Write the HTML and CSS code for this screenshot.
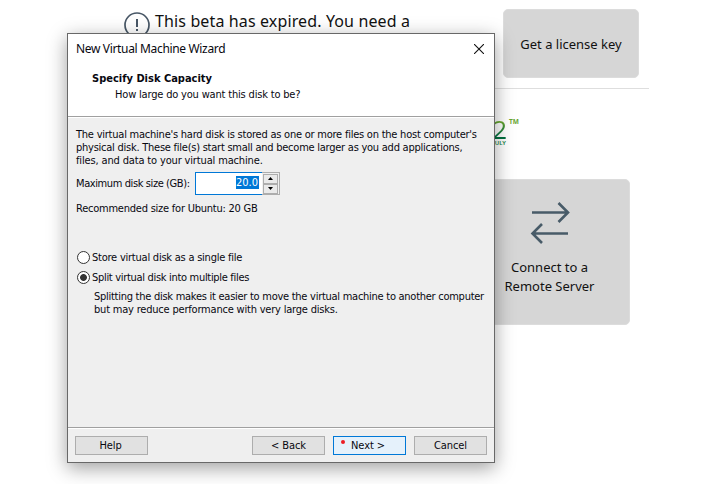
FILE: index.html
```html
<!DOCTYPE html>
<html lang="en">
<head>
<meta charset="utf-8">
<title>New Virtual Machine Wizard</title>
<link rel="stylesheet" href="styles.css">
</head>
<body>
<main class="home">
  <header class="banner">
    <svg class="alert" width="26" height="26" viewBox="0 0 26 26"><circle cx="13" cy="13" r="12" fill="none" stroke="#485766" stroke-width="1.7"/><path d="M13 7v8M13 17v2" stroke="#485766" stroke-width="2"/></svg>
    <p class="notice">This beta has expired. You need a</p>
    <div class="license"><span>Get a license key</span></div>
  </header>
  <section class="content">
    <div class="logo">
      <span class="logo-main"><span class="logo-two">2</span><span class="logo-sub">ULY</span></span>
      <span class="logo-tm">TM</span>
    </div>
    <div class="connect">
      <svg width="40" height="42" viewBox="0 0 40 42" fill="none" stroke="#485b68" stroke-width="2.6"><path d="M2 10.500H38M28.500 1l9.500 9.500L28.500 20M38 31.500H2.500M12 22L2.500 31.500L12 41"/></svg>
      <span>Connect to a</span>
      <span>Remote Server</span>
    </div>
  </section>
</main>

<div class="dialog">
  <div class="head">
    <div class="titlebar">
      <span class="title">New Virtual Machine Wizard</span>
      <svg width="10" height="10" viewBox="0 0 10 10"><path d="M0 0l10 10M10 0L0 10" stroke="#111" stroke-width="1.1"/></svg>
    </div>
    <div class="heading"><span>Specify Disk Capacity</span></div>
    <div class="sub"><span>How large do you want this disk to be?</span></div>
  </div>
  <div class="body">
    <div class="line"><span class="p1">The virtual machine's hard disk is stored as one or more files on the host computer's</span></div>
    <div class="line"><span class="p2">physical disk. These file(s) start small and become larger as you add applications,</span></div>
    <div class="line"><span class="p3">files, and data to your virtual machine.</span></div>
    <div class="size-row">
      <span class="size-label">Maximum disk size (GB):</span>
      <div class="field">
        <div class="entry"><span class="selected">20.0</span></div>
        <div class="spin">
          <span class="step"><svg width="5" height="3" viewBox="0 0 5 3"><path d="M0 3L2.500 0L5 3z"/></svg></span>
          <span class="step"><svg width="5" height="3" viewBox="0 0 5 3"><path d="M0 0L2.500 3L5 0z"/></svg></span>
        </div>
      </div>
    </div>
    <div class="line rec"><span>Recommended size for Ubuntu: 20 GB</span></div>
    <div class="option"><i class="radio"></i><span class="o1">Store virtual disk as a single file</span></div>
    <div class="option"><i class="radio on"></i><span class="o2">Split virtual disk into multiple files</span></div>
    <div class="line hint"><span class="h1">Splitting the disk makes it easier to move the virtual machine to another computer</span></div>
    <div class="line hint"><span class="h2">but may reduce performance with very large disks.</span></div>
  </div>
  <div class="footer">
    <div class="btn help"><span>Help</span></div>
    <div class="btn"><span>&lt; Back</span></div>
    <div class="btn next"><span>Next &gt;</span><i class="dot"></i></div>
    <div class="btn"><span>Cancel</span></div>
  </div>
</div>
</body>
</html>
```
FILE: styles.css
```css
* { box-sizing: border-box; }
body { margin: 0; width: 727px; height: 484px; overflow: hidden; background: #fff; color: #111; font-family: "Noto Sans", sans-serif; }
p { margin: 0; }
span { white-space: nowrap; }

.home { width: 525px; margin-left: 124px; }
.banner { display: flex; height: 89px; border-bottom: 1px solid #dedede; }
.alert { margin-top: 12px; flex: none; }
.notice { margin: 9px 0 0 5px; width: 348px; font-size: 16px; line-height: 24px; letter-spacing: .13px; white-space: nowrap; flex: none; }
.license { margin-top: 9px; width: 136px; height: 69px; flex: none; border: 1px solid #dcdcdc; border-radius: 5px; background: #d6d6d6; display: flex; align-items: center; justify-content: center; font-size: 13px; }

.content { display: flex; flex-direction: column; align-items: flex-start; margin-left: 356px; }
.logo { display: flex; height: 90px; padding-top: 27px; margin-left: 10px; color: #21884a; }
.logo-main { display: flex; flex-direction: column; align-items: flex-end; width: 17px; }
.logo-two { font: 26px/27px "Open Sans", sans-serif; height: 24px; background: linear-gradient(#68a630 25%, #00703f 80%); -webkit-background-clip: text; background-clip: text; color: transparent; }
.logo-sub { font-size: 6px; line-height: 6px; font-weight: 600; padding-right: 1px; }
.logo-tm { margin: 2px 0 0 2px; font-size: 6.5px; line-height: 8px; font-weight: 700; color: #68a630; }
.connect { width: 150px; height: 146px; padding: 22px 11px 0 0; border: 1px solid #dcdcdc; border-radius: 5px; background: #d6d6d6; display: flex; flex-direction: column; align-items: center; font-size: 13px; line-height: 19px; }
.connect svg { margin-bottom: 14px; }

.dialog { position: absolute; left: 67px; top: 33px; width: 428px; height: 430px; border: 1px solid #686868; background: #efefef; box-shadow: 0 5px 18px rgba(0,0,0,.38); display: flex; flex-direction: column; color: #080810; font-family: "DejaVu Sans Condensed", "DejaVu Sans", sans-serif; font-stretch: condensed; font-size: 11px; line-height: 13px; letter-spacing: -.23px; }
.head { height: 84px; background: #fff; border-bottom: 1px solid #fff; box-shadow: inset 0 -1px #a0a0a0; }
.titlebar { display: flex; justify-content: space-between; align-items: center; height: 29px; padding: 0 10px 0 8px; font: 12px/16px "Noto Sans", sans-serif; letter-spacing: -.34px; }
.heading { height: 17px; margin-top: 8px; padding-left: 24px; font-weight: 700; letter-spacing: 0; line-height: 15px; }
.sub { padding-left: 47px; letter-spacing: -.18px; }
.body { height: 309px; padding: 10px 8px 0; }
.line { height: 13px; }
.p2 { letter-spacing: -.245px; }
.p3 { letter-spacing: -.15px; }
.size-row { display: flex; align-items: center; height: 24px; margin-top: 4px; }
.size-label { width: 119px; letter-spacing: -.4px; }
.field { width: 85px; height: 23px; display: flex; border: 1px solid #adadad; border-left: 0; background: #f0f0f0; }
.entry { width: 67px; margin: -1px 0; border: 1px solid #0078d7; border-right: 0; background: #fff; padding: 3px 3px 0 0; text-align: right; }
.selected { display: inline-block; height: 13px; padding-right: 1px; background: #0078d7; color: #fff; letter-spacing: 0; }
.spin { display: flex; flex-direction: column; padding: 1px 1px 0; width: 17px; }
.step { height: 10px; border: 1px solid #adadad; background: #eaeaea; display: flex; align-items: center; justify-content: center; }
.rec { margin-top: 7px; }
.option { display: flex; align-items: center; height: 20px; margin-left: 1px; gap: 2px; }
.rec + .option { margin-top: 32px; }
.o2 { letter-spacing: -.31px; }
.radio { width: 13px; height: 13px; border: 1px solid #333; border-radius: 50%; background: #fff; flex: none; }
.radio.on { background: radial-gradient(circle, #333 0 3px, #fff 3.8px); }
.hint { padding-left: 18px; }
.option + .hint { margin-top: 3px; }
.h1 { letter-spacing: -.265px; }
.h2 { letter-spacing: -.2px; }
.footer { flex: 1; border-top: 1px solid #a0a0a0; box-shadow: inset 0 1px #fff; padding: 8px 7px 0; display: flex; gap: 8px; }
.btn { position: relative; width: 73px; height: 19px; border: 1px solid #adadad; background: #e1e1e1; text-align: center; line-height: 18px; letter-spacing: -.1px; }
.help { margin-right: auto; padding-right: 2px; }
.next { border-color: #0078d7; background: #e5f1fb; padding-right: 3px; }
.dot { position: absolute; left: 7px; top: 3px; width: 4px; height: 4px; border-radius: 50%; background: #ed1c24; }
```
